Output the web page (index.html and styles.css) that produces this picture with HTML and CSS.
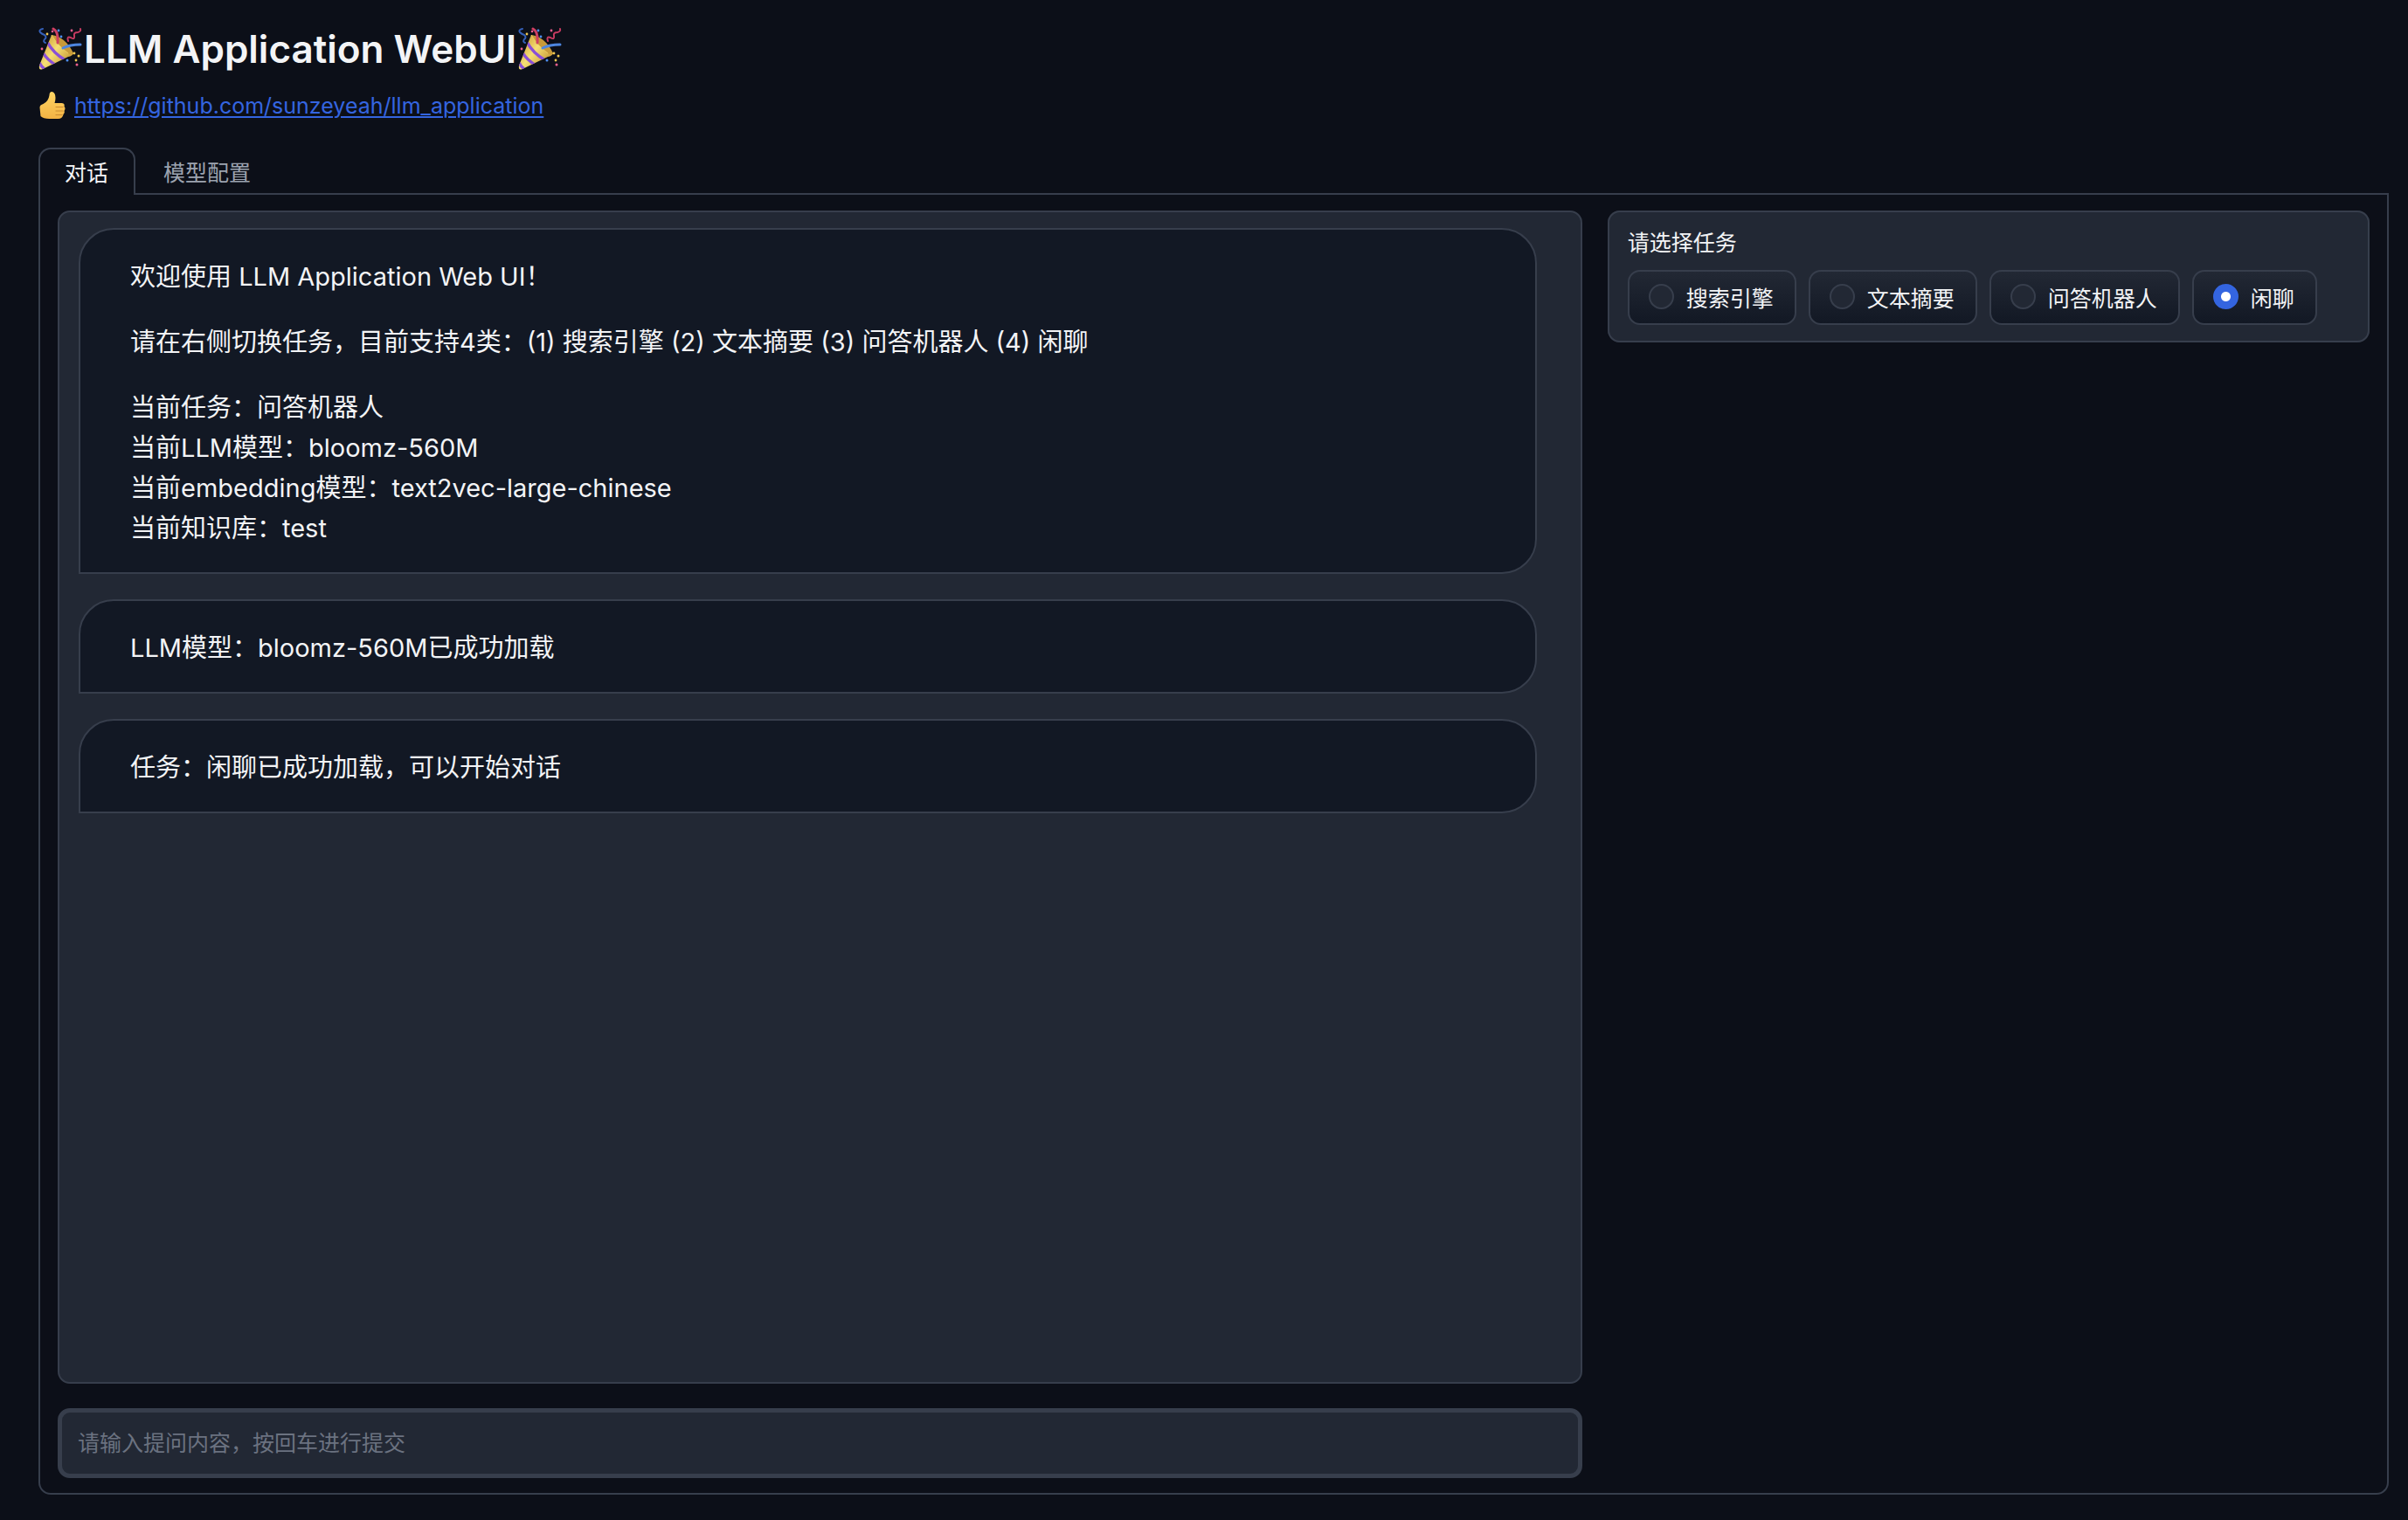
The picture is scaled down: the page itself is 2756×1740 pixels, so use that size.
FILE: index.html
```html
<!DOCTYPE html>
<html lang="zh-CN">
<head>
<meta charset="utf-8">
<meta name="viewport" content="width=device-width, initial-scale=1">
<title>LLM Application WebUI</title>
<link rel="stylesheet" href="styles.css">
</head>
<body>
<svg class="sprite" aria-hidden="true">
  <defs>
    <linearGradient id="cone" x1="0" y1="0.2" x2="0.9" y2="0.9">
      <stop offset="0" stop-color="#c9972f"/>
      <stop offset="0.45" stop-color="#f6df74"/>
      <stop offset="1" stop-color="#c08f2c"/>
    </linearGradient>
    <linearGradient id="hand" x1="0" y1="0" x2="0" y2="1">
      <stop offset="0" stop-color="#ffd664"/>
      <stop offset="1" stop-color="#f3b344"/>
    </linearGradient>
    <clipPath id="cone-clip"><path d="M15 9 Q28 14 40 30 Q39 33 34 34 L5 48 Q0 50 1 44 Z"/></clipPath>
    <symbol id="popper" viewBox="0 0 50 50">
      <path d="M15 9 Q28 14 40 30 Q39 33 34 34 L5 48 Q0 50 1 44 Z" fill="url(#cone)"/>
      <g clip-path="url(#cone-clip)" fill="none" stroke="#8a50d6" stroke-width="3.500">
        <path d="M10 17 Q17 30 31 38"/><path d="M5 29 Q10 38 21 44"/><path d="M1 40 Q3 46 9 49"/>
      </g>
      <path d="M15 9 Q31 11 40 30 Q38 33 34 30 Q22 21 15 9 Z" fill="#c89a3a"/>
      <path d="M15 9 Q22 21 34 30" fill="none" stroke="#eccb60" stroke-width="1"/>
      <g fill="none" stroke-linecap="round">
        <path d="M5 2 Q0 3 2 6 Q4 8 7 9 Q10 12 7 14 Q5 17 8 18" stroke="#3560b8" stroke-width="2"/>
        <path d="M17 2 Q23 5 22 18" stroke="#cf3f62" stroke-width="3"/>
        <path d="M34 16 Q32 10 37 12 Q42 15 41 10 Q40 6 45 6 Q49 5 48 2" stroke="#c73a60" stroke-width="2"/>
        <path d="M28 24 Q36 20 48 20" stroke="#4d86e0" stroke-width="3"/>
      </g>
      <g fill="#4d8df0"><circle cx="23" cy="4" r="1.400"/><circle cx="26" cy="11" r="1.400"/><circle cx="33" cy="38" r="1.500"/></g>
      <g fill="#ef5f8f"><circle cx="16" cy="5" r="1.300"/><circle cx="38" cy="4" r="1.400"/><circle cx="4" cy="25" r="1.400"/><circle cx="44" cy="43" r="1.500"/></g>
      <g fill="#f0c850"><circle cx="10" cy="8" r="1.400"/><circle cx="41" cy="30" r="1.400"/><circle cx="46" cy="33" r="1.500"/><circle cx="43" cy="38" r="1.400"/></g>
    </symbol>
    <symbol id="thumb" viewBox="0 0 30 32">
      <path d="M1 18 Q1 15 5 14 Q11 11 12 4 Q12 0 15 0 Q19 1 19 7 Q19 10 18 13 L26 13 Q30 13 29 17 Q31 19 29 22 Q30 24 28 26 Q27 31 22 31 L12 31 Q5 31 2 28 Z" fill="url(#hand)"/>
      <path d="M19 17.500 H28 M19 22 H28 M19 26.500 H27" stroke="#c98a30" stroke-width="1" fill="none"/>
    </symbol>
  </defs>
</svg>
<div class="app">
  <header class="header">
    <h1 class="title"><svg class="popper" role="img" aria-label="party popper"><use href="#popper"/></svg><span>LLM Application WebUI</span><svg class="popper" role="img" aria-label="party popper"><use href="#popper"/></svg></h1>
    <p class="repo"><svg class="thumb" role="img" aria-label="thumbs up"><use href="#thumb"/></svg><a href="https://github.com/sunzeyeah/llm_application">https://github.com/sunzeyeah/llm_application</a></p>
  </header>
  <nav class="tabs" role="tablist">
    <button class="tab tab-active" role="tab" aria-selected="true">对话</button>
    <button class="tab" role="tab" aria-selected="false">模型配置</button>
  </nav>
  <main class="panel">
    <section class="conversation">
      <div class="chat">
        <article class="bubble">
          <p>欢迎使用 LLM Application Web UI！</p>
          <p>请在右侧切换任务，目前支持4类：(1) 搜索引擎 (2) 文本摘要 (3) 问答机器人 (4) 闲聊</p>
          <p>当前任务：问答机器人<br>当前LLM模型：bloomz-560M<br>当前embedding模型：text2vec-large-chinese<br>当前知识库：test</p>
        </article>
        <article class="bubble"><p>LLM模型：bloomz-560M已成功加载</p></article>
        <article class="bubble"><p>任务：闲聊已成功加载，可以开始对话</p></article>
      </div>
      <input class="prompt" type="text" aria-label="提问内容" placeholder="请输入提问内容，按回车进行提交">
    </section>
    <fieldset class="tasks">
      <legend class="tasks-title">请选择任务</legend>
      <div class="options">
        <label class="option"><input type="radio" name="task">搜索引擎</label>
        <label class="option"><input type="radio" name="task">文本摘要</label>
        <label class="option"><input type="radio" name="task">问答机器人</label>
        <label class="option"><input type="radio" name="task" checked>闲聊</label>
      </div>
    </fieldset>
  </main>
</div>
</body>
</html>
```
FILE: styles.css
```css
:root {
  --page: #0c0f18;
  --block: #222834;
  --bubble: #121824;
  --line: #373e4c;
  --text: #f3f4f6;
}

* {
  box-sizing: border-box;
}

body {
  margin: 0;
  background: var(--page);
  color: var(--text);
  font-family: Inter, "Noto Sans CJK SC", sans-serif;
  font-size: 25px;
}

.sprite {
  position: absolute;
  width: 0;
  height: 0;
}

.app {
  display: flex;
  flex-direction: column;
  min-height: 100vh;
  padding: 24px 22px 29px 44px;
}

.title {
  display: flex;
  align-items: center;
  gap: 2px;
  margin: 0 0 12px;
  font-size: 44px;
  font-weight: 600;
  line-height: 64px;
}

.popper {
  width: 50px;
  height: 50px;
}

.repo {
  display: flex;
  align-items: center;
  gap: 10px;
  margin: 0 0 27px;
  line-height: 42px;
}

.thumb {
  width: 31px;
  height: 32px;
}

.repo a {
  color: #3465e0;
  text-decoration-thickness: 2px;
  text-underline-offset: 3px;
}

.tabs {
  display: flex;
  gap: 2px;
  border-bottom: 2px solid var(--line);
}

.tab {
  height: 54px;
  margin-bottom: -2px;
  padding: 0 29px 3px 28px;
  border: 2px solid transparent;
  border-bottom: 0;
  border-radius: 14px 14px 0 0;
  background: none;
  color: #9ca3af;
  font: inherit;
}

.tab-active {
  border-color: var(--line);
  background: var(--page);
  color: var(--text);
}

.panel {
  display: grid;
  flex: 1;
  grid-template-columns: 2fr 1fr;
  gap: 29px;
  padding: 18px 20px 17px;
  border: 2px solid var(--line);
  border-top: 0;
  border-radius: 0 0 14px 14px;
}

.conversation {
  display: flex;
  flex-direction: column;
  gap: 28px;
}

.chat {
  display: flex;
  flex: 1;
  flex-direction: column;
  gap: 29px;
  padding: 18px 50px 18px 22px;
  border: 2px solid var(--line);
  border-radius: 14px;
  background: var(--block);
}

.bubble {
  padding: 31px 57px 27px;
  border: 2px solid var(--line);
  border-radius: 40px 40px 40px 0;
  background: var(--bubble);
  font-size: 29px;
  line-height: 46px;
}

.bubble p {
  margin: 0;
}

.bubble p + p {
  margin-top: 29px;
}

.prompt {
  height: 80px;
  padding: 0 18px;
  border: 5px solid var(--line);
  border-radius: 14px;
  background: var(--block);
  color: var(--text);
  font: inherit;
}

.prompt::placeholder {
  color: #6b7280;
}

.tasks {
  align-self: start;
  min-width: 0;
  margin: 0;
  padding: 18px 21px;
  border: 2px solid var(--line);
  border-radius: 14px;
  background: var(--block);
}

.tasks-title {
  float: left;
  padding: 0;
  margin-bottom: 14px;
  line-height: 34px;
}

.options {
  display: flex;
  clear: both;
  flex-wrap: wrap;
  gap: 14px;
}

.option {
  display: flex;
  align-items: center;
  gap: 14px;
  height: 63px;
  padding: 0 24px 2px 22px;
  border: 2px solid var(--line);
  border-radius: 14px;
  background: linear-gradient(var(--block), var(--bubble));
}

.option input {
  width: 29px;
  height: 29px;
  margin: 0;
  border: 2px solid var(--line);
  border-radius: 50%;
  background: var(--block);
  appearance: none;
}

.option input:checked {
  border-color: #3465e0;
  background: radial-gradient(circle, #fff 5px, #3465e0 6px);
}
```
